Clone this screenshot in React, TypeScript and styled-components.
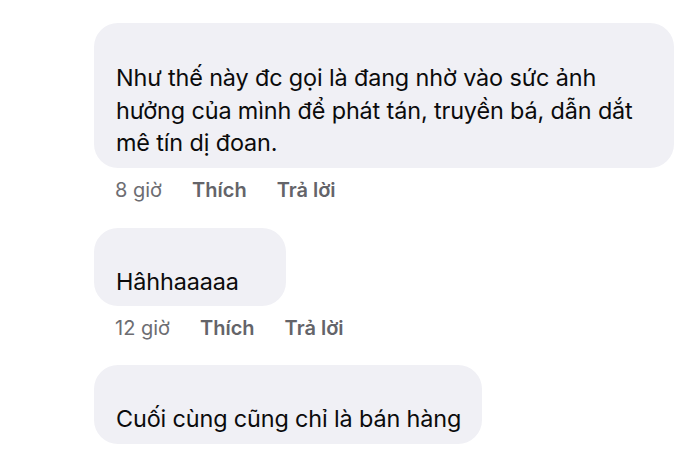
import React from "react";
import styled, { createGlobalStyle } from "styled-components";

const Global = createGlobalStyle`
  html, body { margin: 0; padding: 0; background: #ffffff; }
  body { font-family: Inter, "Noto Sans", "Liberation Sans", sans-serif; -webkit-font-smoothing: antialiased; }
`;

const Page = styled.div`
  width: 700px;
  height: 451px;
  overflow: hidden;
  box-sizing: border-box;
  padding: 23px 0 0 94px;
  display: flex;
  flex-direction: column;
  align-items: flex-start;
`;

const Comment = styled.div<{ $gapAfter?: number }>`
  display: flex;
  flex-direction: column;
  align-items: flex-start;
  margin-bottom: ${(p) => p.$gapAfter ?? 0}px;
`;

const Bubble = styled.div<{ $padTop?: number }>`
  box-sizing: border-box;
  min-width: 192px;
  max-width: 580px;
  padding: ${(p) => p.$padTop ?? 38}px 21px 8px 22px;
  background: #f0f0f5;
  border-radius: 24px;
  color: #0b0b0c;
  font-size: 23.4px;
  line-height: 32.5px;
  letter-spacing: -0.13px;
`;

const Meta = styled.div`
  display: flex;
  gap: 30px;
  margin-top: 10px;
  padding-left: 21px;
  font-size: 20px;
  line-height: 24px;
  color: #6d6d72;
`;

const Time = styled.span`
  font-weight: 400;
`;

const Action = styled.span`
  font-weight: 600;
  color: #646469;
`;

type Item = { text: string; time: string; padTop?: number; gapAfter?: number };

const items: Item[] = [
  {
    text: "Như thế này đc gọi là đang nhờ vào sức ảnh hưởng của mình để phát tán, truyền bá, dẫn dắt mê tín dị đoan.",
    time: "8 giờ",
    padTop: 39,
    gapAfter: 26,
  },
  { text: "Hâhhaaaaa", time: "12 giờ", padTop: 38, gapAfter: 25 },
  { text: "Cuối cùng cũng chỉ là bán hàng", time: "", padTop: 38 },
];

export default function App() {
  return (
    <>
      <Global />
      <Page>
        {items.map((it, i) => (
          <Comment key={i} $gapAfter={it.gapAfter}>
            <Bubble $padTop={it.padTop}>{it.text}</Bubble>
            {it.time && (
              <Meta>
                <Time>{it.time}</Time>
                <Action>Thích</Action>
                <Action>Trả lời</Action>
              </Meta>
            )}
          </Comment>
        ))}
      </Page>
    </>
  );
}
